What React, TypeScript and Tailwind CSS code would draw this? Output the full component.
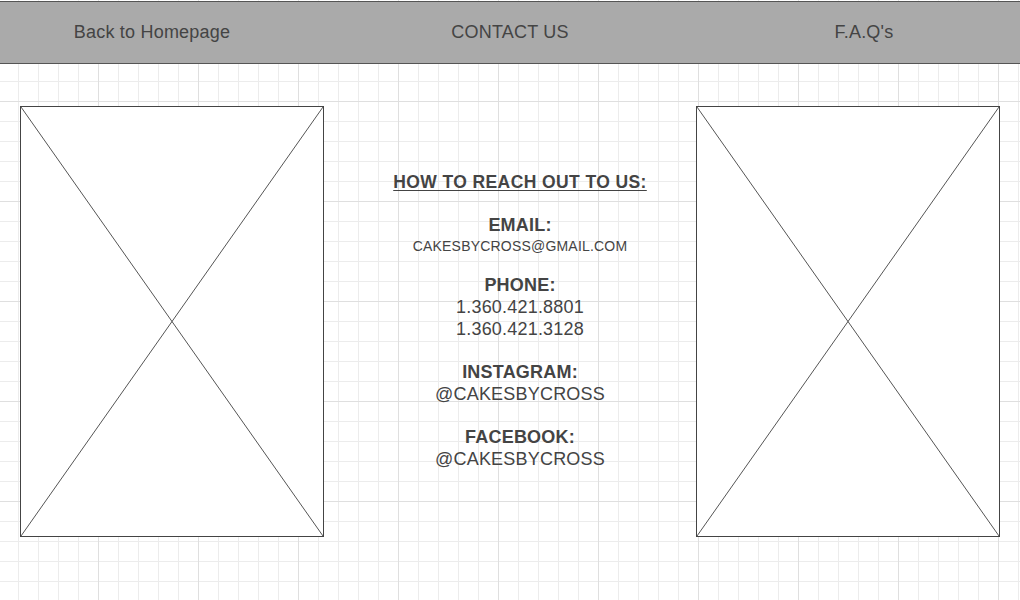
import React from 'react';

function Placeholder() {
  return (
    <div className="w-[304px] h-[431px] border border-[#444] bg-white shrink-0">
      <svg className="w-full h-full block" viewBox="0 0 100 100" preserveAspectRatio="none">
        <line x1="0" y1="0" x2="100" y2="100" stroke="#555" strokeWidth="1" vectorEffect="non-scaling-stroke" />
        <line x1="100" y1="0" x2="0" y2="100" stroke="#555" strokeWidth="1" vectorEffect="non-scaling-stroke" />
      </svg>
    </div>
  );
}

export default function App() {
  return (
    <div
      className="min-h-[600px] w-[1020px] bg-white font-['Liberation_Sans',Arial,sans-serif] text-[#444] tracking-[0.2px] bg-[linear-gradient(to_right,#dfdfdf_1px,transparent_1px),linear-gradient(to_bottom,#dfdfdf_1px,transparent_1px),linear-gradient(to_right,#ececec_1px,transparent_1px),linear-gradient(to_bottom,#ececec_1px,transparent_1px)] bg-[size:100px_100px,100px_100px,20px_20px,20px_20px] bg-[position:98px_0,0_1px,18px_0,0_1px]"
    >
      {/* top nav */}
      <div className="pt-[1px]">
        <nav className="h-[63px] bg-[#aaaaaa] border-y border-[#555] flex items-center text-[18px]">
          <a className="w-[304px] text-center">Back to Homepage</a>
          <a className="w-[412px] text-center">CONTACT US</a>
          <a className="w-[296px] text-center">F.A.Q's</a>
        </nav>
      </div>

      <div className="flex px-[20px] pt-[42px]">
        <Placeholder />

        <div className="flex-1 pl-[20px] pt-[66px] text-center text-[18px] leading-[21.7px]">
          <p className="font-bold underline underline-offset-[2px] text-[17.5px] tracking-[0.4px]">HOW TO REACH OUT TO US:</p>

          <p className="font-bold mt-[21.7px]">EMAIL:</p>
          <p className="text-[14px] leading-[19px]">CAKESBYCROSS@GMAIL.COM</p>

          <p className="font-bold mt-[19px]">PHONE:</p>
          <p>1.360.421.8801</p>
          <p>1.360.421.3128</p>

          <p className="font-bold mt-[21.7px]">INSTAGRAM:</p>
          <p>@CAKESBYCROSS</p>

          <p className="font-bold mt-[21.7px]">FACEBOOK:</p>
          <p>@CAKESBYCROSS</p>
        </div>

        <Placeholder />
      </div>
    </div>
  );
}
